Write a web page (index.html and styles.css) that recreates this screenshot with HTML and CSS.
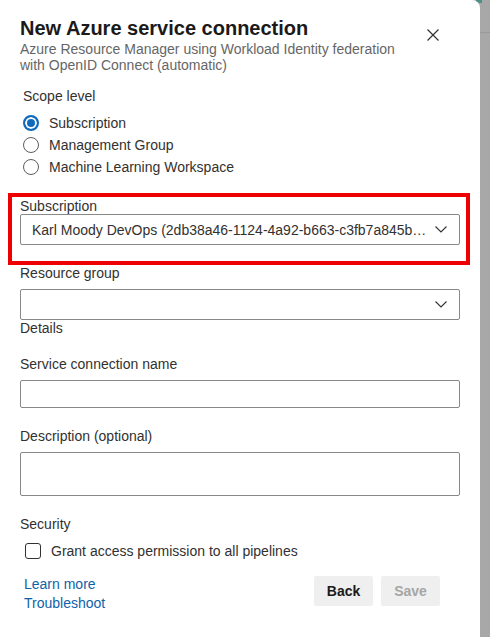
FILE: index.html
```html
<!DOCTYPE html>
<html>
<head>
<meta charset="utf-8">
<link rel="stylesheet" href="styles.css">
</head>
<body>
<div class="panel">
  <div class="header">
    <div class="titles">
      <h1 class="title">New Azure service connection</h1>
      <div class="subtitle">Azure Resource Manager using Workload Identity federation with OpenID Connect (automatic)</div>
    </div>
    <button class="close" aria-label="Close">
      <svg width="12" height="12" viewBox="0 0 12 12"><path d="M0.5 0.5 L11.5 11.5 M11.5 0.5 L0.5 11.5" stroke="#323130" stroke-width="1.2" fill="none"/></svg>
    </button>
  </div>

  <div class="scope">
    <div class="scope-label">Scope level</div>
    <div class="radios">
      <label class="radio-row"><span class="radio checked"></span>Subscription</label>
      <label class="radio-row"><span class="radio"></span>Management Group</label>
      <label class="radio-row"><span class="radio"></span>Machine Learning Workspace</label>
    </div>
  </div>

  <div class="highlight">
    <div class="field-label">Subscription</div>
    <div class="dropdown">
      <span class="dd-text">Karl Moody DevOps (2db38a46-1124-4a92-b663-c3fb7a845b…</span>
      <svg class="chev" width="12" height="7" viewBox="0 0 12 7"><path d="M0.5 0.5 L6 6 L11.5 0.5" stroke="#323130" stroke-width="1.1" fill="none"/></svg>
    </div>
  </div>

  <div class="field-label rg">Resource group</div>
  <div class="dropdown">
    <span class="dd-text"></span>
    <svg class="chev" width="12" height="7" viewBox="0 0 12 7"><path d="M0.5 0.5 L6 6 L11.5 0.5" stroke="#323130" stroke-width="1.1" fill="none"/></svg>
  </div>

  <div class="section-label">Details</div>
  <div class="field-label name-label">Service connection name</div>
  <div class="textbox"></div>
  <div class="field-label desc-label">Description (optional)</div>
  <div class="textarea"></div>

  <div class="section-label security">Security</div>
  <label class="check-row"><span class="checkbox"></span>Grant access permission to all pipelines</label>

  <div class="footer">
    <div class="links">
      <a class="link">Learn more</a>
      <a class="link">Troubleshoot</a>
    </div>
    <div class="buttons">
      <button class="btn back">Back</button>
      <button class="btn save">Save</button>
    </div>
  </div>
</div>
</body>
</html>
```

FILE: styles.css
```css
html, body {
  margin: 0;
  padding: 0;
  height: 100%;
}
body {
  background-color: #a8a8a8;
  background-image:
    linear-gradient(#4f8f86, #4f8f86),
    linear-gradient(#9a9a9a, #9a9a9a);
  background-size: 6px 3px, 100% 1px;
  background-position: 476px 0, 0 32px;
  background-repeat: no-repeat;
  font-family: "Liberation Sans", Arial, sans-serif;
  color: #323130;
  font-size: 14px;
  overflow: hidden;
}
.panel {
  position: relative;
  width: 480px;
  height: 637px;
  box-sizing: border-box;
  background: #fff;
  border-top-right-radius: 8px;
  padding: 15px 20px 0 20px;
}
.header {
  display: flex;
  justify-content: space-between;
  align-items: flex-start;
}
.title {
  margin: 0;
  font-size: 20px;
  font-weight: bold;
  line-height: 26px;
  color: #1b1a19;
}
.subtitle {
  width: 390px;
  color: #666;
  font-size: 14px;
  line-height: 16px;
}
.close {
  border: none;
  background: none;
  padding: 0;
  margin: 14px 21px 0 0;
  width: 12px;
  height: 12px;
  display: flex;
}
.scope {
  padding-left: 3px;
  margin-top: 13px;
}
.scope-label {
  line-height: 20px;
}
.radios {
  margin-top: 6px;
  display: flex;
  flex-direction: column;
}
.radio-row {
  display: flex;
  align-items: center;
  gap: 10px;
  height: 22px;
}
.radio {
  width: 16px;
  height: 16px;
  box-sizing: border-box;
  border: 1px solid #605e5c;
  border-radius: 50%;
}
.radio.checked {
  border: 2px solid #0f6cbd;
  background: #0f6cbd;
  box-shadow: inset 0 0 0 2px #fff;
}
.highlight {
  margin: 15px -10px 0 -12px;
  border: 4px solid #ee0000;
  padding: 1px 6px 16px 8px;
}
.field-label {
  line-height: 16px;
}
.dropdown {
  height: 31px;
  box-sizing: border-box;
  border: 1px solid #8a8886;
  border-radius: 2px;
  display: flex;
  align-items: center;
  padding: 0 12px 0 11px;
  justify-content: space-between;
}
.dd-text {
  white-space: nowrap;
  overflow: hidden;
}
.chev {
  flex: none;
}
.rg {
  margin-bottom: 8px;
}
.section-label {
  line-height: 16px;
}
.name-label {
  margin-top: 20px;
  margin-bottom: 8px;
}
.textbox {
  height: 28px;
  box-sizing: border-box;
  border: 1px solid #8a8886;
  border-radius: 2px;
}
.desc-label {
  margin-top: 20px;
  margin-bottom: 8px;
}
.textarea {
  height: 44px;
  box-sizing: border-box;
  border: 1px solid #8a8886;
  border-radius: 2px;
}
.security {
  margin-top: 20px;
}
.check-row {
  display: flex;
  align-items: center;
  gap: 10px;
  margin: 11px 0 0 5px;
  height: 16px;
}
.checkbox {
  width: 16px;
  height: 16px;
  box-sizing: border-box;
  border: 1px solid #323130;
  border-radius: 3px;
}
.footer {
  margin-top: 16px;
  display: flex;
  justify-content: space-between;
  padding-left: 4px;
  padding-right: 20px;
}
.links {
  display: flex;
  flex-direction: column;
}
.link {
  color: #1062a8;
  line-height: 19px;
  text-decoration: none;
}
.buttons {
  display: flex;
  gap: 8px;
  margin-top: 1px;
}
.btn {
  border: none;
  border-radius: 2px;
  background: #efefef;
  font-family: "Liberation Sans", Arial, sans-serif;
  font-size: 14px;
  font-weight: bold;
  width: 59px;
  height: 30px;
  padding: 0;
}
.back {
  color: #1b1a19;
}
.save {
  color: #a6a6a6;
}
```
